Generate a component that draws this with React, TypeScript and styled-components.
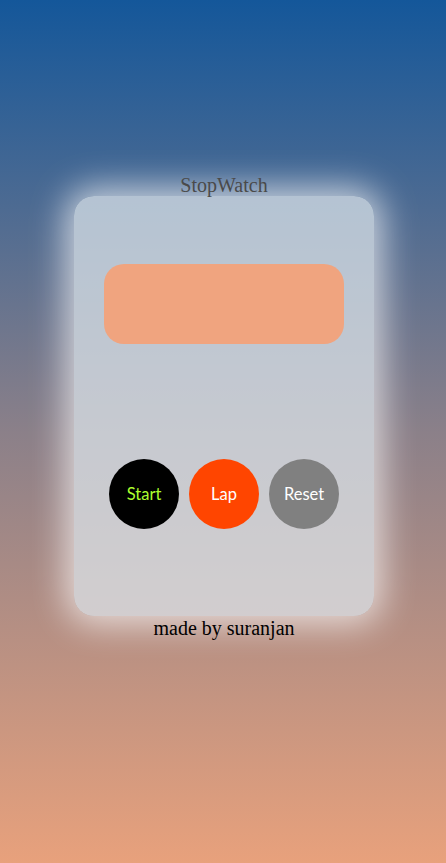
import React from "react";
import styled, { createGlobalStyle } from "styled-components";

const Global = createGlobalStyle`
  html, body { margin: 0; padding: 0; }
  body {
    min-height: 863px;
    background: linear-gradient(180deg, #14579a 0%, #8b8089 50%, #e8a17c 100%);
    font-family: "Liberation Serif", "Times New Roman", serif;
  }
`;

const Page = styled.div`
  display: flex;
  flex-direction: column;
  align-items: center;
  padding-top: 175px;
  padding-left: 2px;
  min-height: 863px;
  box-sizing: border-box;
`;

const Title = styled.div`
  font-size: 20px;
  line-height: 21px;
  color: #4a4a4a;
  height: 21px;
  position: relative;
  z-index: 1;
`;

const Card = styled.div`
  width: 300px;
  height: 420px;
  box-sizing: border-box;
  border-radius: 20px;
  background: rgba(222, 230, 236, 0.72);
  box-shadow: 0 0 34px 8px rgba(255, 255, 255, 0.7);
  display: flex;
  flex-direction: column;
  align-items: center;
  padding-top: 68px;
`;

const Display = styled.div`
  width: 240px;
  height: 80px;
  border-radius: 20px;
  background: #f0a47f;
`;

const Buttons = styled.div`
  display: flex;
  gap: 10px;
  margin-top: 115px;
`;

const Circle = styled.button<{ $bg: string; $fg: string }>`
  width: 70px;
  height: 70px;
  border-radius: 50%;
  border: none;
  padding: 0;
  background: ${(p) => p.$bg};
  color: ${(p) => p.$fg};
  font-family: Lato, "Noto Sans", sans-serif;
  font-size: 16.5px;
  cursor: pointer;
`;

const Footer = styled.div`
  font-size: 20px;
  line-height: 22px;
  color: #000;
  margin-top: 1px;
`;

export default function App() {
  return (
    <>
      <Global />
      <Page>
        <Title>StopWatch</Title>
        <Card>
          <Display />
          <Buttons>
            <Circle $bg="#000000" $fg="#adff2f">Start</Circle>
            <Circle $bg="#ff4500" $fg="#ffffff">Lap</Circle>
            <Circle $bg="#808080" $fg="#ffffff">Reset</Circle>
          </Buttons>
        </Card>
        <Footer>made by suranjan</Footer>
      </Page>
    </>
  );
}
